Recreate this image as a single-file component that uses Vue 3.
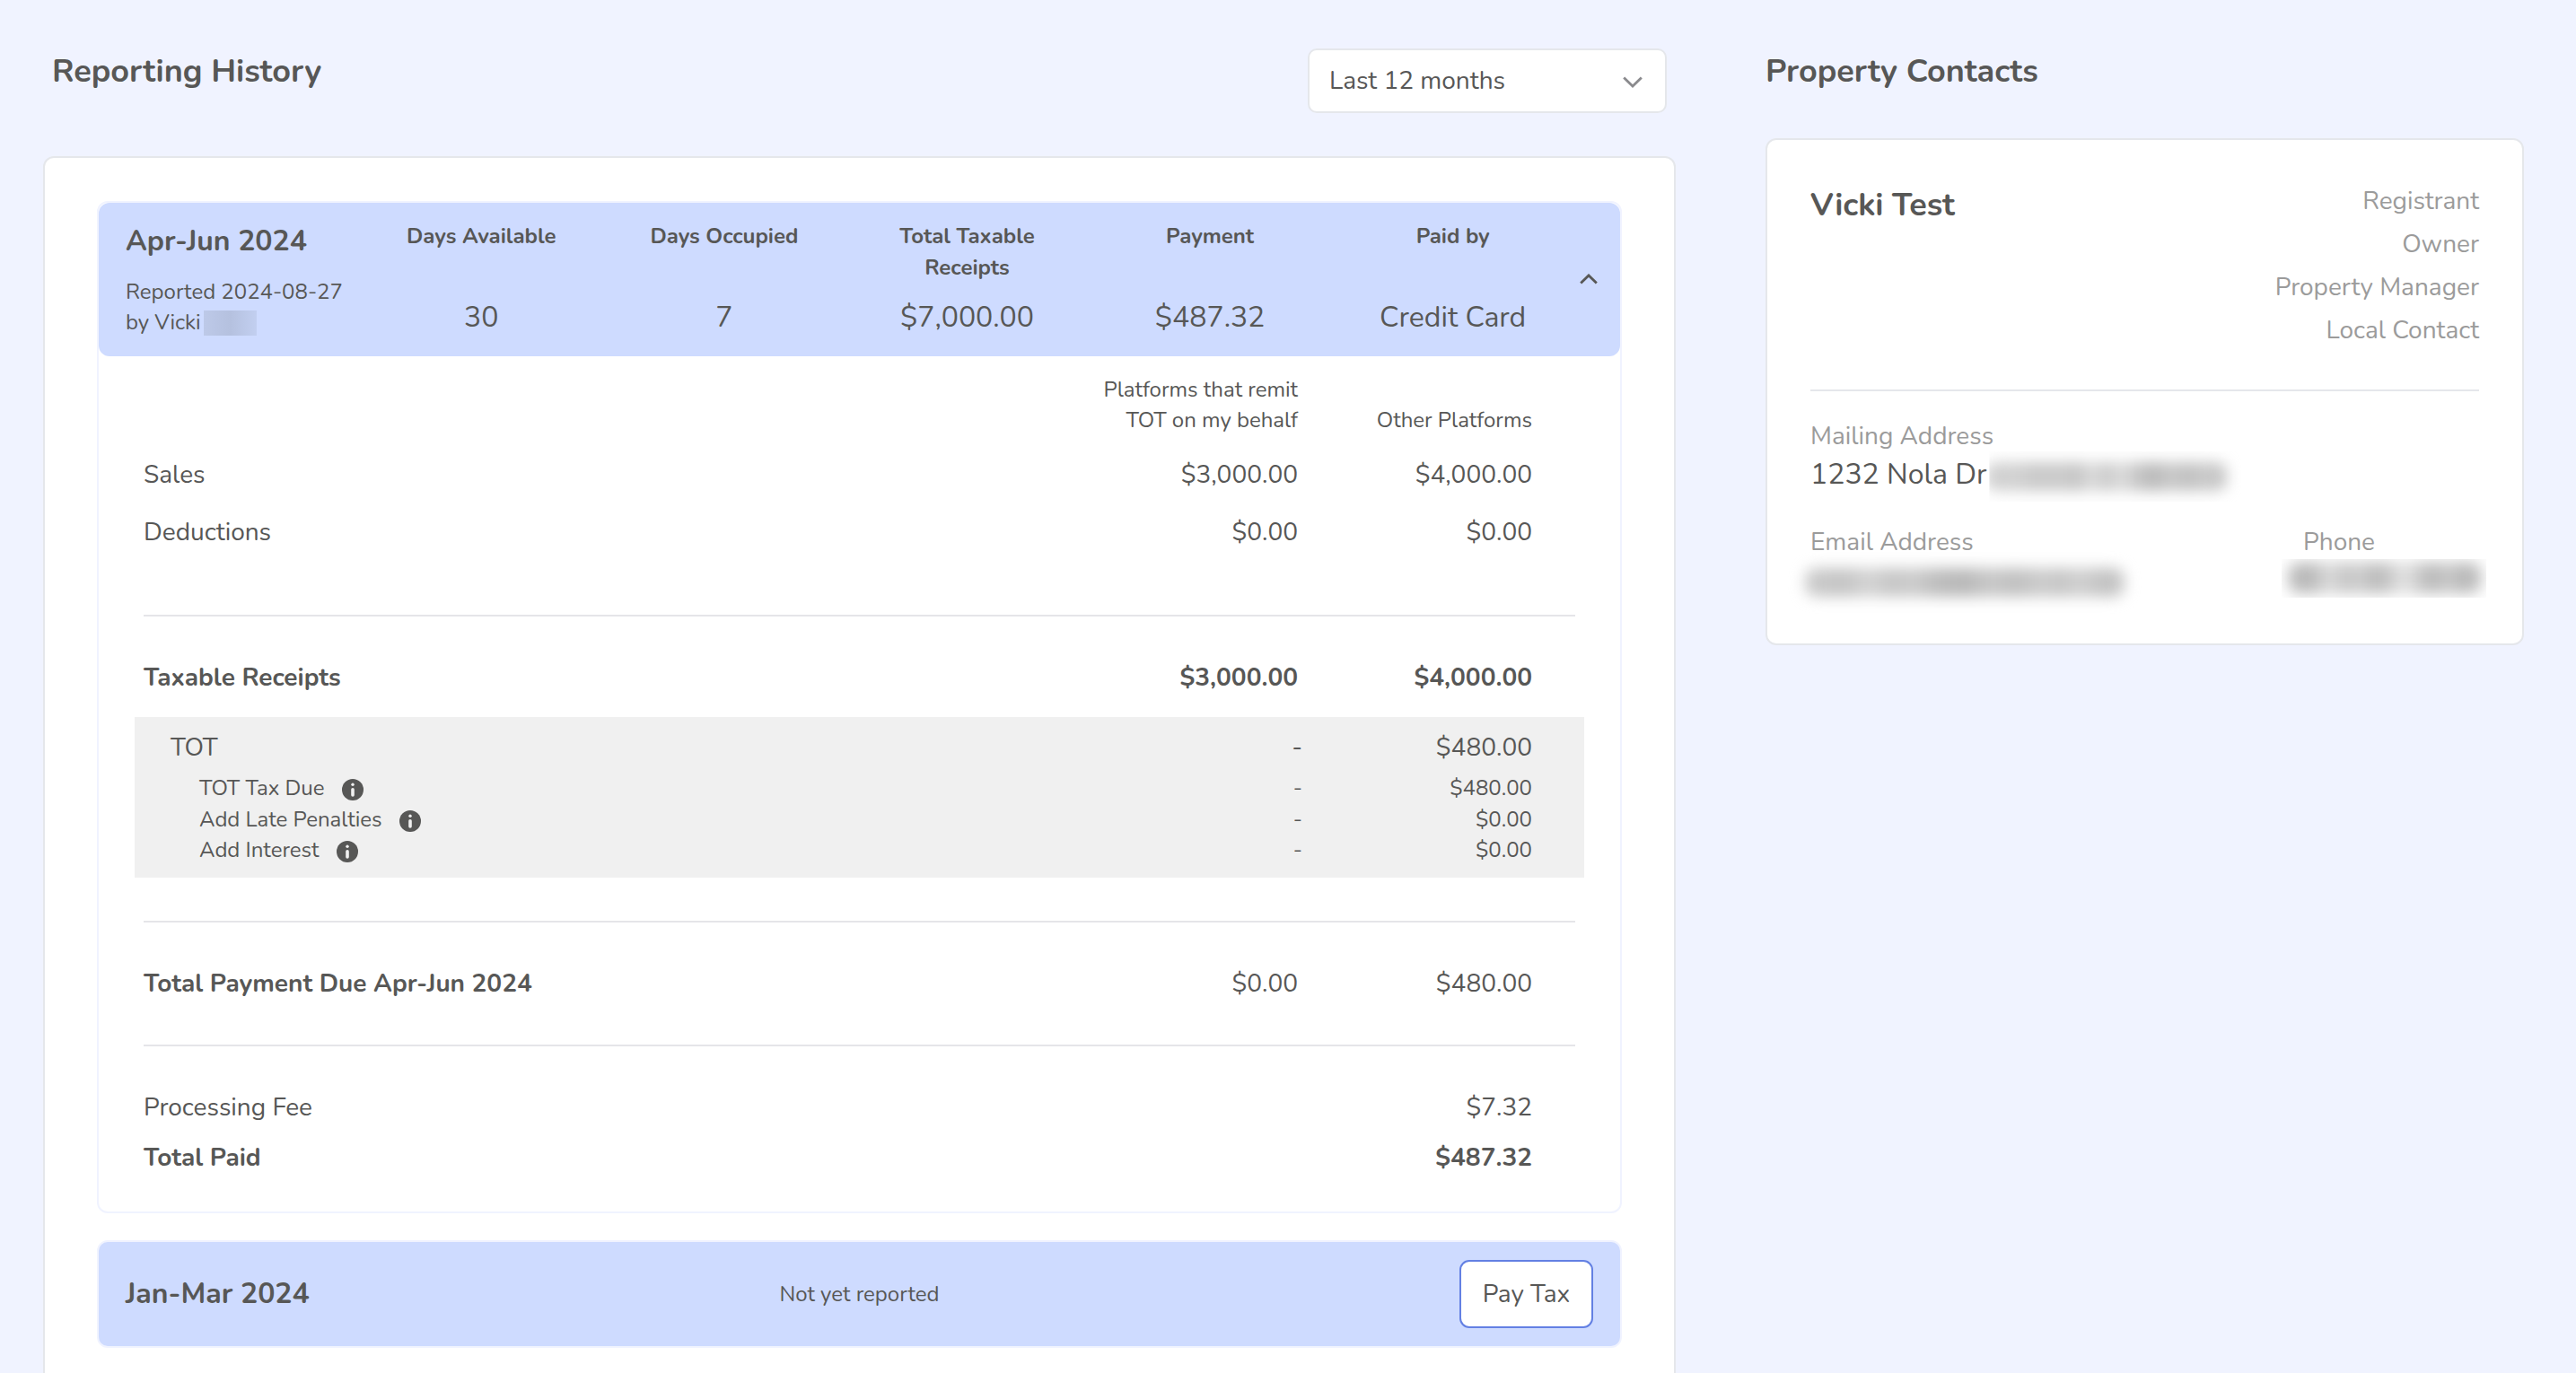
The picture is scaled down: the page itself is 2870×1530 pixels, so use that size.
<script setup>
import { ref } from 'vue';

const range = ref('Last 12 months');
const expanded = ref(true);

const stats = [
  { label: 'Days Available', value: '30' },
  { label: 'Days Occupied', value: '7' },
  { label: 'Total Taxable\nReceipts', value: '$7,000.00' },
  { label: 'Payment', value: '$487.32' },
  { label: 'Paid by', value: 'Credit Card' },
];

const taxLines = [
  { label: 'TOT Tax Due', platform: '-', other: '$480.00' },
  { label: 'Add Late Penalties', platform: '-', other: '$0.00' },
  { label: 'Add Interest', platform: '-', other: '$0.00' },
];

const roles = ['Registrant', 'Owner', 'Property Manager', 'Local Contact'];
</script>

<template>
  <main class="page">
    <section class="history">
      <div class="top">
        <h2>Reporting History</h2>
        <button class="select">
          <span>{{ range }}</span>
          <svg width="22" height="14" viewBox="0 0 22 14">
            <path d="M1.2 1.5 L11 11 L20.8 1.5" />
          </svg>
        </button>
      </div>

      <div class="panel">
        <article class="report">
          <header class="summary" @click="expanded = !expanded">
            <div class="period">
              <h3>Apr-Jun 2024</h3>
              <p>Reported 2024-08-27</p>
              <p class="by">by Vicki <span class="redacted-name"></span></p>
            </div>
            <div v-for="stat in stats" :key="stat.label" class="stat">
              <p class="label">{{ stat.label }}</p>
              <p class="value">{{ stat.value }}</p>
            </div>
            <svg class="chevron" width="20" height="12" viewBox="0 0 20 12">
              <path d="M1.2 10.5 L10 1.9 L18.8 10.5" />
            </svg>
          </header>

          <div v-if="expanded" class="details">
            <div class="row head">
              <span></span>
              <span>Platforms that remit<br>TOT on my behalf</span>
              <span>Other Platforms</span>
            </div>
            <div class="row tall">
              <span>Sales</span><span>$3,000.00</span><span>$4,000.00</span>
            </div>
            <div class="row tall">
              <span>Deductions</span><span>$0.00</span><span>$0.00</span>
            </div>
            <hr class="first">
            <div class="row tall bold receipts">
              <span>Taxable Receipts</span><span>$3,000.00</span><span>$4,000.00</span>
            </div>

            <div class="tax">
              <div class="row tot">
                <span>TOT</span><span class="dash">-</span><span>$480.00</span>
              </div>
              <div v-for="line in taxLines" :key="line.label" class="row sub">
                <span class="with-icon">
                  {{ line.label }}
                  <svg width="24" height="24" viewBox="0 0 24 24">
                    <circle cx="12" cy="12" r="12" />
                    <circle class="mark" cx="12" cy="6.2" r="1.7" />
                    <rect class="mark" x="10.2" y="9.9" width="3.6" height="9.8" rx="1.8" />
                  </svg>
                </span>
                <span class="dash">{{ line.platform }}</span>
                <span>{{ line.other }}</span>
              </div>
            </div>

            <hr>
            <div class="row due">
              <span class="bold">Total Payment Due Apr-Jun 2024</span><span>$0.00</span><span>$480.00</span>
            </div>
            <hr>
            <div class="row fee">
              <span>Processing Fee</span><span></span><span>$7.32</span>
            </div>
            <div class="row bold">
              <span>Total Paid</span><span></span><span>$487.32</span>
            </div>
          </div>
        </article>

        <article class="report pending">
          <h3>Jan-Mar 2024</h3>
          <p>Not yet reported</p>
          <button class="pay">Pay Tax</button>
        </article>
      </div>
    </section>

    <section class="contacts">
      <h2>Property Contacts</h2>
      <div class="contact">
        <div class="who">
          <h3>Vicki Test</h3>
          <ul>
            <li v-for="role in roles" :key="role">{{ role }}</li>
          </ul>
        </div>
        <p class="caption">Mailing Address</p>
        <p class="address">1232 Nola Dr<span class="redacted street"></span></p>
        <div class="reach">
          <div>
            <p class="caption">Email Address</p>
            <span class="redacted email"></span>
          </div>
          <div class="phone-col">
            <p class="caption phone-label">Phone</p>
            <span class="redacted phone"></span>
          </div>
        </div>
      </div>
    </section>
  </main>
</template>

<style>
body {
  background: #f0f3ff;
}
</style>

<style scoped>
.page {
  display: flex;
  align-items: flex-start;
  width: 2870px;
  height: 1530px;
  box-sizing: border-box;
  padding: 54px 58px 0 48px;
  overflow: hidden;
  color: #575756;
  font-family: Nunito, Lato, sans-serif;
  font-size: 28px;
  line-height: 42px;
  white-space: nowrap;
}

h2,
h3,
p,
ul {
  margin: 0;
  padding: 0;
  list-style: none;
}

h2 {
  font-size: 36px;
  font-weight: 700;
  line-height: 52px;
}

h3 {
  font-size: 32px;
  font-weight: 700;
  line-height: 48px;
}

button {
  font: inherit;
  color: inherit;
  background: white;
  box-sizing: border-box;
}

path {
  fill: none;
  stroke: #575756;
  stroke-width: 2.8;
}

.history {
  width: 1819px;
  margin-right: 100px;
}

.top {
  display: flex;
  justify-content: space-between;
  height: 120px;
  padding: 0 10px;
}

.select {
  display: flex;
  justify-content: space-between;
  align-items: center;
  width: 400px;
  height: 72px;
  padding: 0 25px 0 22px;
  border: 2px solid #e5e7eb;
  border-radius: 10px;

  svg {
    margin-top: 3px;
  }

  path {
    stroke: #8a8a8d;
  }
}

.panel {
  display: flex;
  flex-direction: column;
  gap: 30px;
  height: 1400px;
  box-sizing: border-box;
  padding: 48px 58px;
  background: white;
  border: 2px solid #e5e7eb;
  border-radius: 12px;
}

.report {
  border: 2px solid #f0f3ff;
  border-radius: 12px;
}

.summary {
  display: flex;
  height: 171px;
  background: #cedbff;
  border-radius: 12px;
}

.period {
  width: 261px;
  padding: 19px 0 0 30px;
  font-size: 24px;
  line-height: 34.3px;

  h3 {
    margin-bottom: 15px;
  }
}

.by {
  display: flex;
  align-items: center;
}

.redacted-name {
  width: 59px;
  height: 28px;
  margin: 2px 0 0 3px;
  background: linear-gradient(90deg, #bdc9e8, #b5c1df 50%, #c2cff0);
}

.stat {
  width: 270.6px;
  padding-top: 20px;
  text-align: center;
}

.label {
  height: 70px;
  margin-bottom: 14px;
  font-size: 24px;
  font-weight: 700;
  line-height: 34.6px;
  white-space: pre-line;
}

.value {
  font-size: 32px;
  line-height: 48px;
}

.chevron {
  margin: 79px 0 0 6px;
}

.details {
  padding: 20px 50px 39px;
}

.row {
  display: grid;
  grid-template-columns: 1fr 300px 261px;
  padding-right: 48px;

  > span:not(:first-child) {
    text-align: right;
  }
}

.head {
  align-items: end;
  height: 68px;
  margin-bottom: 12px;
  font-size: 24px;
  line-height: 34px;
}

.tall {
  line-height: 64px;
}

.bold {
  font-weight: 700;
}

hr {
  height: 2px;
  margin: 48px 0 0;
  border: 0;
  background: #e5e5e9;
}

.first {
  margin-top: 60px;
}

.receipts {
  margin: 36px 0 12px;
}

.tax {
  height: 179px;
  margin: 0 -10px;
  padding: 13px 10px 0;
  box-sizing: border-box;
  background: #f0f0f0;
}

.tot {
  margin-bottom: 7px;
  padding-left: 30px;
}

.sub {
  height: 34.5px;
  padding-left: 62px;
  font-size: 24px;
  line-height: 34.5px;
}

.row .dash {
  margin-right: -5px;
}

.with-icon {
  display: flex;
  align-items: center;
  gap: 19.5px;

  svg {
    margin-top: 4px;
    fill: #575756;
  }

  .mark {
    fill: #f0f0f0;
  }
}

.due {
  margin: 47px 0;

  + hr {
    margin: 0;
  }
}

.fee {
  margin: 47px 0 14px;
}

.pending {
  display: grid;
  grid-template-columns: 1fr auto 1fr;
  align-items: center;
  height: 116px;
  padding: 0 30px;
  background: #cedbff;

  p {
    font-size: 24px;
  }
}

.pay {
  justify-self: end;
  width: 149px;
  height: 76px;
  padding: 0 0 1px;
  border: 2px solid #6380e3;
  border-radius: 11px;
}

.contacts {
  width: 845px;

  h2 {
    margin-bottom: 48px;
  }
}

.contact {
  height: 565px;
  box-sizing: border-box;
  padding: 44px 48px 0;
  background: white;
  border: 2px solid #e5e7eb;
  border-radius: 12px;
}

.who {
  display: flex;
  justify-content: space-between;
  height: 234px;
  margin-bottom: 29px;
  border-bottom: 2px solid #e5e7eb;

  h3 {
    padding-top: 5px;
    font-size: 36px;
    letter-spacing: -0.15px;
  }

  ul {
    color: #9b9b9b;
    text-align: right;
    line-height: 48px;
  }
}

.caption {
  color: #9b9b9b;
}

.address {
  display: flex;
  align-items: center;
  padding-top: 1px;
  font-size: 32px;
}

.redacted {
  display: block;
  height: 32px;
  border-radius: 12px;
  filter: blur(8px);
}

/* blurred bars keep an uneven, word-like density */
.street {
  width: 268px;
  margin-top: 4px;
  background: linear-gradient(90deg, #cfcfcf, #d2d2d2 12%, #c8c8c8 22%, #cccccc 30%, #c4c4c4 38%, #dedede 44%, #c8c8c8 50%, #dedede 56%, #c8c8c8 62%, #b8b8b8 70%, #cacaca 76%, #c0c0c0 84%, #cacaca 90%, #c4c4c4);
  clip-path: inset(-12px -16px -12px 3px);
}

.reach {
  display: flex;
  justify-content: space-between;
  margin-top: 33px;
}

.email {
  width: 356px;
  margin: 8px 0 0 -6px;
  background: linear-gradient(90deg, #cccccc, #c4c4c4 12%, #d4d4d4 20%, #c6c6c6 27%, #cccccc 34%, #bcbcbc 42%, #b8b8b8 50%, #c8c8c8 58%, #c0c0c0 66%, #cccccc 74%, #c6c6c6 80%, #d0d0d0 86%, #c2c2c2 94%, #c8c8c8);
}

.phone-col {
  width: 216px;
  margin-right: -3px;
}

.phone-label {
  padding-left: 17px;
}

.phone {
  height: 34px;
  margin-top: 2px;
  background: linear-gradient(90deg, #c0c0c0, #b8b8b8 12%, #dcdcdc 21%, #c4c4c4 30%, #d0d0d0 36%, #bababa 46%, #c8c8c8 52%, #e6e6e6 60%, #c8c8c8 68%, #b8b8b8 76%, #cccccc 82%, #b8b8b8 90%, #c4c4c4);
  clip-path: inset(-4px -5px -5px -7px);
}
</style>
